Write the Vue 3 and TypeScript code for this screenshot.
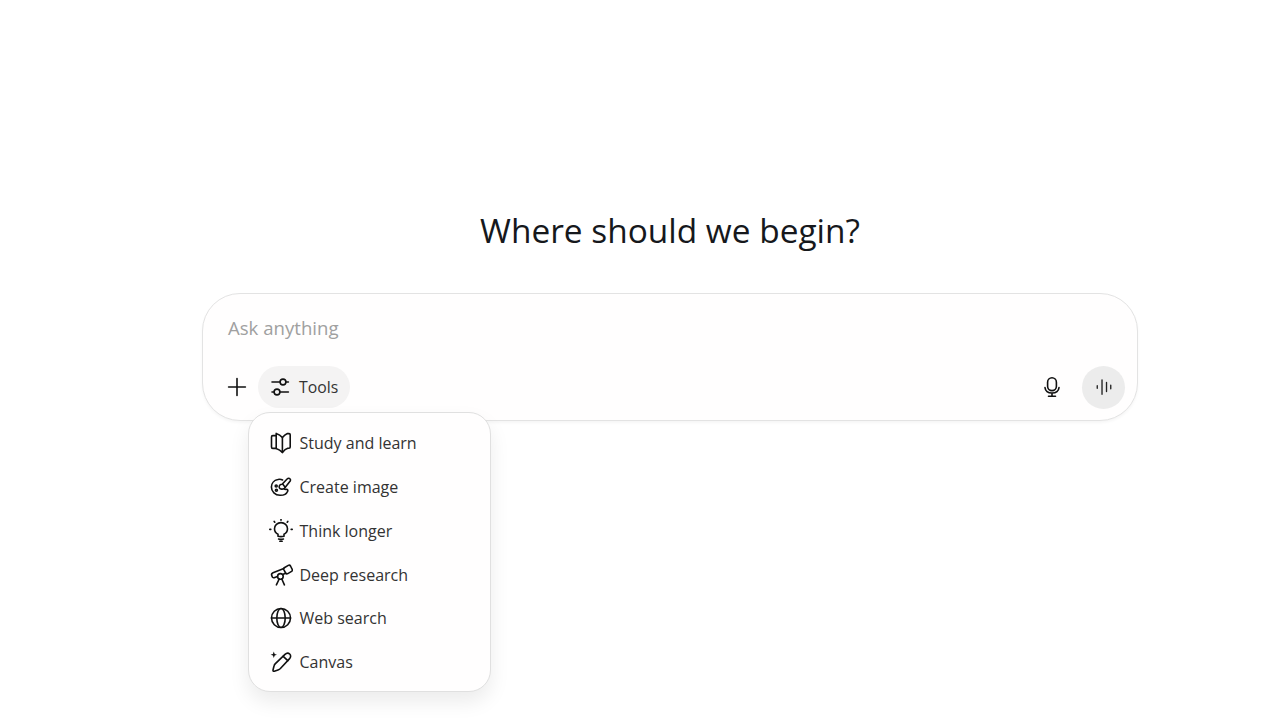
<template>
  <main class="page">
    <h1 class="title">Where should we begin?</h1>
    <div class="composer">
      <div class="placeholder">Ask anything</div>
      <div class="toolbar">
        <button class="icon-btn plus" aria-label="Add">
          <svg width="20" height="20" viewBox="0 0 20 20"><path d="M10 1.6v16.8M1.6 10h16.8" /></svg>
        </button>
        <button class="tools-btn">
          <svg width="20" height="20" viewBox="0 0 20 20">
            <path d="M2 5h8M16 5h2.4M2 15h2M10 15h8.4" />
            <circle cx="13" cy="5" r="2.9" />
            <circle cx="7" cy="15" r="2.9" />
          </svg>
          <span>Tools</span>
        </button>
        <div class="spacer"></div>
        <button class="icon-btn mic" aria-label="Dictate">
          <svg width="20" height="20" viewBox="0 0 20 20">
            <rect x="5.6" y="0.8" width="8.8" height="12.8" rx="4.4" />
            <path d="M3 10.600c.4 3.400 3.400 5.400 7 5.400s6.600-2 7-5.400M10 16v3M6.500 19.200h7" />
          </svg>
        </button>
        <button class="voice-btn" aria-label="Voice">
          <svg class="bars" width="20" height="20" viewBox="0 0 20 20">
            <path d="M2.500 8.500v3M7.800 2v16M12.800 5v10M17.500 8v4" />
          </svg>
        </button>
      </div>

      <ul class="menu">
        <li v-for="item in items" :key="item.label" class="menu-item">
          <svg width="24" height="24" viewBox="0 0 24 24" v-html="item.icon"></svg>
          <span>{{ item.label }}</span>
        </li>
      </ul>
    </div>
  </main>
</template>

<script setup lang="ts">
interface ToolItem {
  label: string
  icon: string
}

const items: ToolItem[] = [
  {
    label: 'Study and learn',
    icon: '<path d="M7.200 2.400 C9.800 3.200 11.800 4.600 13.400 6.600 V21.400 C11.800 19.600 9.800 18.200 7.200 17.400 Z"/><path d="M13.400 6.600 C14.800 4.800 16.400 3.400 18.400 2.600 H20 C20.800 2.600 21.200 3 21.200 3.800 V16 C21.200 16.800 20.800 17.200 20 17.200 H18.800 C16.800 17.800 15 19.400 13.400 21.400"/><path d="M7.200 4.600 H3.800 C3 4.600 2.500 5.100 2.500 6 V16 C2.500 16.900 3 17.400 3.800 17.400 H7.200"/>'
  },
  {
    label: 'Create image',
    icon: '<path d="M13.600 5 C12.200 4.300 10.600 4.100 8.900 4.500 C5 5.300 2.400 8.400 2.400 12 C2.400 16.600 6.200 20.200 11 20.300 C14.400 20.400 17.600 18.800 18.700 16.200 C19.100 15.200 18.600 14.400 17.600 14.400 C16.600 14.400 15.700 14.600 14.900 13.800"/><path d="M20.400 3.400 C21.400 3.900 21.800 5 21.200 6 L15.700 13 C14.700 14 13.300 14.300 11.900 13.900 C10.500 13.500 9.900 12.300 10.300 11.100 C10.700 9.900 11.900 9.300 13.100 9.300 L18.100 4 C18.700 3.400 19.600 3.100 20.400 3.400 Z"/><path d="M14 9.600 L16.200 12.200"/><circle cx="7.200" cy="11" r="1"/><circle cx="7.400" cy="15.200" r="1"/>'
  },
  {
    label: 'Think longer',
    icon: '<path d="M9 17.200 V15.300 C6.900 14.200 5.500 12.100 5.500 9.800 C5.500 6.400 8.400 3.600 12 3.600 C15.600 3.600 18.500 6.400 18.500 9.800 C18.500 12.100 17.100 14.200 15 15.300 V17.200 C13 17.800 11 17.800 9 17.200 Z"/><path d="M9.600 20 C11.200 20.500 12.800 20.500 14.400 20 M10.800 22.200 H13.200"/><path d="M12 .2 V1.200 M5.200 2.400 L5.800 3.200 M18.800 2.400 L18.200 3.200 M.8 10.400 H1.800 M22.200 10.400 H23.200"/>'
  },
  {
    label: 'Deep research',
    icon: '<path d="M15.300 4.800 L19.300 2.400 C20.200 1.900 21 2.100 21.500 3 L23.200 6.300 C23.600 7.200 23.400 7.900 22.600 8.400 L18.800 10.600 C17.900 11.100 17.100 10.900 16.600 10 L14.800 6.600 C14.400 5.800 14.600 5.200 15.300 4.800 Z"/><path d="M14.800 5.600 L4 9.800 C2.800 10.300 2.300 11.300 2.700 12.400 L3.100 13.400 C3.500 14.600 4.600 15.100 5.800 14.600 L8.400 13.600"/><path d="M16.600 10.200 L14.200 11.300"/><circle cx="11.400" cy="13.400" r="2.800"/><path d="M10.200 16 L7.400 21.800 M12.800 16 L15.400 21.800"/>'
  },
  {
    label: 'Web search',
    icon: '<circle cx="12" cy="12" r="9.500"/><ellipse cx="12" cy="12" rx="4.200" ry="9.500"/><path d="M2.500 12 H21.500"/>'
  },
  {
    label: 'Canvas',
    icon: '<path d="M16 4.400 C17.400 3 19.400 2.800 20.700 4 C22 5.200 21.900 7.200 20.600 8.600 L11.400 18.500 C10.700 19.200 9.900 19.700 9 20 L5.300 21.200 C4.400 21.500 3.800 20.900 4 20 L5 16 C5.200 15.100 5.700 14.300 6.400 13.600 Z"/><path d="M14.200 6.400 L18.800 10.600"/><path class="solid" d="M4.800 1.600 L5.700 4 L8 4.800 L5.700 5.600 L4.800 8 L3.900 5.600 L1.600 4.800 L3.900 4 Z"/>'
  }
]
</script>

<style>
html,
body {
  margin: 0;
  background: #fff;
}
</style>

<style scoped>
.page {
  box-sizing: border-box;
  width: 1280px;
  height: 720px;
  padding: 208px 0 0 60px;
  display: flex;
  flex-direction: column;
  align-items: center;
  overflow: hidden;
  background: #fff;
  font-family: "Open Sans", "Noto Sans", sans-serif;
  color: #1a1a1a;
}

.title {
  margin: 0 0 40px;
  font-size: 33.44px;
  line-height: 45px;
  font-weight: 400;
  color: #16181c;
}

.composer {
  position: relative;
  box-sizing: border-box;
  width: 936px;
  height: 128px;
  padding: 21px 12px 11px 13px;
  display: flex;
  flex-direction: column;
  justify-content: space-between;
  border: 1px solid #e3e3e3;
  border-radius: 38px;
  background: #fffefe;
  box-shadow: 0 2px 3px rgba(0, 0, 0, 0.04);
}

.placeholder {
  padding-left: 12px;
  font-size: 18.6px;
  line-height: 26px;
  color: #a0a0a0;
}

.toolbar {
  display: flex;
  align-items: center;
  height: 44px;
}

button {
  padding: 0;
  border: none;
  background: none;
  font: inherit;
  color: inherit;
}

svg {
  fill: none;
  stroke: #111;
  stroke-width: 1.6;
  stroke-linecap: round;
  stroke-linejoin: round;
  flex-shrink: 0;
}

.icon-btn {
  display: flex;
  align-items: center;
  justify-content: center;
  width: 44px;
  height: 44px;
}

.plus {
  width: 41px;
  margin-right: 1px;
}

.tools-btn {
  display: flex;
  align-items: center;
  gap: 9px;
  box-sizing: border-box;
  width: 92px;
  height: 42px;
  padding-left: 12px;
  border-radius: 21px;
  background: #f4f3f3;
  font-size: 15.8px;
  color: #333;
}

.spacer {
  flex: 1;
}

.mic {
  margin-right: 8px;
}

.voice-btn {
  display: flex;
  align-items: center;
  justify-content: center;
  width: 43px;
  height: 43px;
  border-radius: 50%;
  background: #ececec;
}

.bars {
  width: 18px;
  height: 18px;
  stroke: #222;
  stroke-width: 1.5;
}

.menu {
  position: absolute;
  left: 45px;
  top: 118px;
  box-sizing: border-box;
  width: 243px;
  height: 280px;
  margin: 0;
  padding: 8.4px 0;
  list-style: none;
  border: 1px solid #e0e0e0;
  border-radius: 22px;
  background: #fffefe;
  box-shadow: 0 10px 20px rgba(0, 0, 0, 0.08);
}

.menu-item {
  display: flex;
  align-items: center;
  gap: 6.5px;
  height: 43.8px;
  padding-left: 20px;
  font-size: 16px;
  color: #333;
}

.menu-item svg {
  width: 24px;
  height: 24px;
}

.menu-item :deep(.solid) {
  fill: #111;
  stroke: none;
}
</style>
